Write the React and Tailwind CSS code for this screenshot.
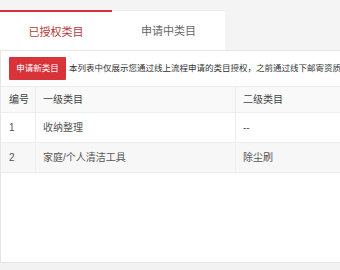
const rows = [
  { id: "1", first: "收纳整理", second: "--" },
  { id: "2", first: "家庭/个人清洁工具", second: "除尘刷" },
]

const App = () => {
  return (
    <div className="w-[340px] h-[270px] overflow-hidden bg-[#f4f4f4] flex flex-col" style={{ fontFamily: '"Liberation Sans", "Noto Sans CJK SC", sans-serif' }}>
      <div className="h-[10px] bg-[#f4f4f4]"></div>
      <div className="flex h-[40px] shrink-0">
        <div className="w-[112px] bg-white border-t-2 border-[#d0343a] flex items-center justify-center text-[11px] text-[#b33a3a] pt-[2px]">
          已授权类目
        </div>
        <div className="w-[113px] bg-white border-t border-[#ececec] flex items-center justify-center text-[11px] text-[#666] pt-[2px]">
          申请中类目
        </div>
        <div className="flex-1 bg-[#f4f4f4]"></div>
      </div>
      <div className="h-[212px] shrink-0 bg-white border-l border-t border-[#e6e6e6] overflow-hidden">
        <div className="flex items-center h-[35px] px-2 whitespace-nowrap overflow-hidden">
          <button className="h-[23px] w-[57px] bg-[#d9333a] text-white text-[8.5px] rounded-[1px] shrink-0">申请新类目</button>
          <span className="ml-[3px] text-[8.5px] text-[#333]">本列表中仅展示您通过线上流程申请的类目授权，之前通过线下邮寄资质的</span>
        </div>
        <div className="text-[10px] text-[#444]">
          <div className="flex h-[27px] items-center bg-[#f9f9f9] border-y border-[#ededed]">
            <div className="w-[35px] pl-[8px] border-r border-[#ededed] h-full flex items-center">编号</div>
            <div className="w-[200px] pl-[7px] border-r border-[#ededed] h-full flex items-center">一级类目</div>
            <div className="flex-1 pl-[7px]">二级类目</div>
          </div>
          {rows.map((r, i) => (
            <div key={r.id} className={"flex h-[30px] items-center border-b border-[#ededed] text-[#555] " + (i % 2 === 1 ? "bg-[#f7f7f7]" : "bg-white")}>
              <div className="w-[35px] pl-[8px] border-r border-[#ededed] h-full flex items-center">{r.id}</div>
              <div className="w-[200px] pl-[7px] border-r border-[#ededed] h-full flex items-center">{r.first}</div>
              <div className="flex-1 pl-[7px]">{r.second}</div>
            </div>
          ))}
        </div>
      </div>
      <div className="flex-1 bg-[#f2f2f2] border-t border-[#e4e4e4]"></div>
    </div>
  )
}

export default App
